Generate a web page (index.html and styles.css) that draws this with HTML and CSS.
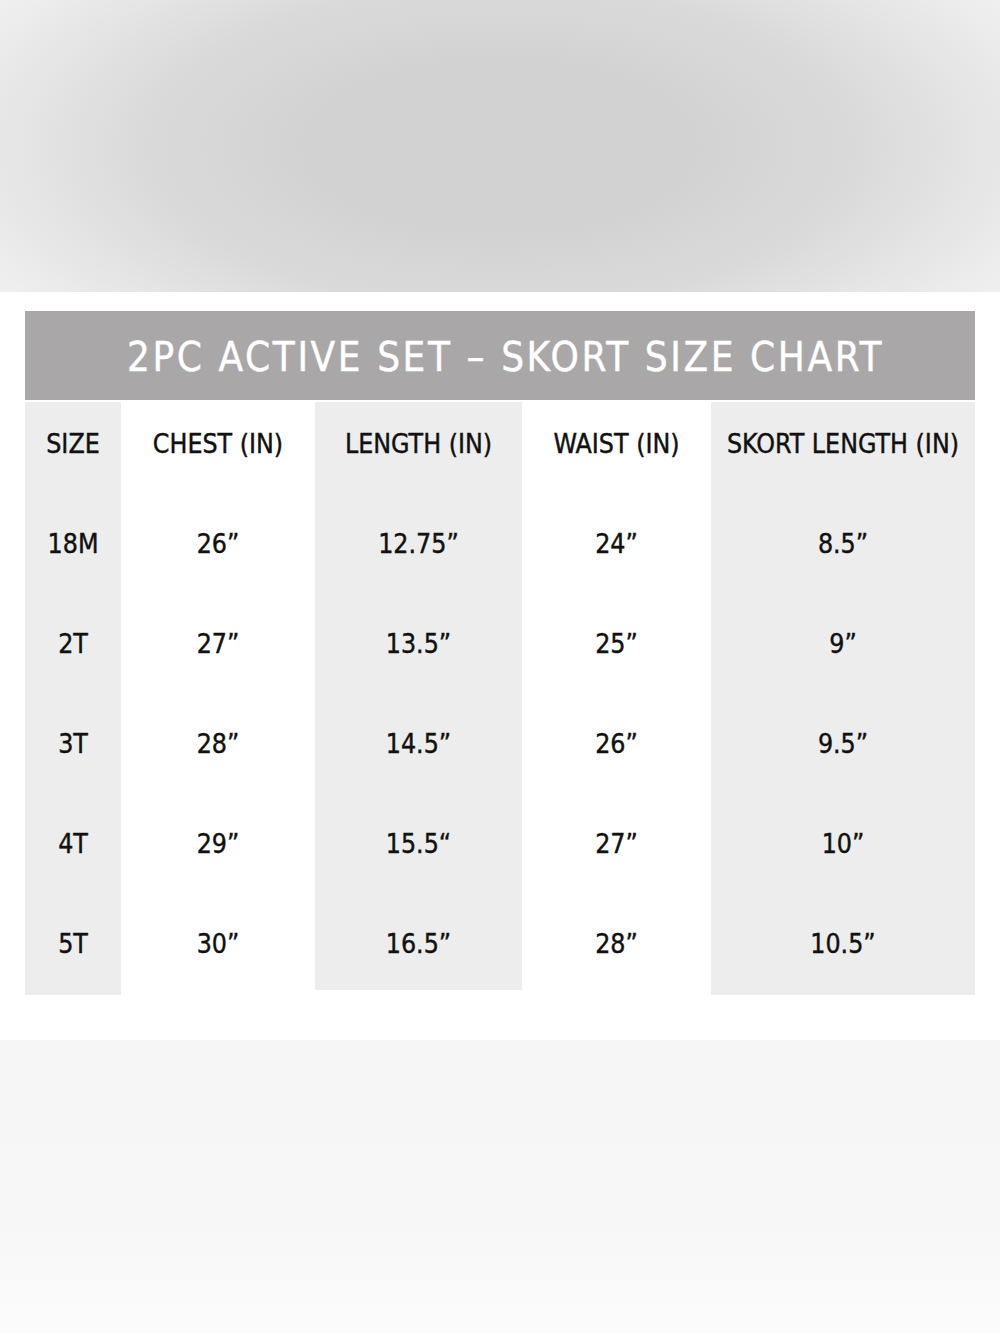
FILE: index.html
```html
<!DOCTYPE html>
<html>
<head>
<meta charset="utf-8">
<link rel="stylesheet" href="styles.css">
</head>
<body>
<div class="top-band"></div>
<div class="chart-band">
  <div class="title-bar">2PC ACTIVE SET – SKORT SIZE CHART</div>
  <div class="grid">
    <div class="col col-size shade">
      <div class="cell">SIZE</div>
      <div class="cell">18M</div>
      <div class="cell">2T</div>
      <div class="cell">3T</div>
      <div class="cell">4T</div>
      <div class="cell">5T</div>
    </div>
    <div class="col col-chest">
      <div class="cell">CHEST (IN)</div>
      <div class="cell">26”</div>
      <div class="cell">27”</div>
      <div class="cell">28”</div>
      <div class="cell">29”</div>
      <div class="cell">30”</div>
    </div>
    <div class="col col-length shade short">
      <div class="cell">LENGTH (IN)</div>
      <div class="cell">12.75”</div>
      <div class="cell">13.5”</div>
      <div class="cell">14.5”</div>
      <div class="cell">15.5“</div>
      <div class="cell">16.5”</div>
    </div>
    <div class="col col-waist">
      <div class="cell">WAIST (IN)</div>
      <div class="cell">24”</div>
      <div class="cell">25”</div>
      <div class="cell">26”</div>
      <div class="cell">27”</div>
      <div class="cell">28”</div>
    </div>
    <div class="col col-skort shade">
      <div class="cell">SKORT LENGTH (IN)</div>
      <div class="cell">8.5”</div>
      <div class="cell">9”</div>
      <div class="cell">9.5”</div>
      <div class="cell">10”</div>
      <div class="cell">10.5”</div>
    </div>
  </div>
</div>
<div class="bottom-band"></div>
</body>
</html>
```
FILE: styles.css
```css
html, body {
  margin: 0;
  padding: 0;
  background: #ffffff;
}
body {
  width: 1000px;
  font-family: "DejaVu Sans Condensed", "DejaVu Sans", sans-serif;
  color: #111111;
}
.top-band {
  height: 292px;
  background:
    radial-gradient(ellipse 62% 95% at 50% 50%, #d3d2d3 30%, #dbdadb 58%, #f3f2f2 100%);
}
.chart-band {
  height: 748px;
  background: #ffffff;
  padding: 19px 25px 0;
  box-sizing: border-box;
}
.title-bar {
  height: 89px;
  background: #a9a7a8;
  color: #ffffff;
  display: flex;
  align-items: center;
  justify-content: center;
  font-size: 40px;
  letter-spacing: 2.6px;
  -webkit-text-stroke: 0.4px #ffffff;
  padding-top: 2px;
  padding-left: 11px;
  box-sizing: border-box;
}
.grid {
  margin-top: 2px;
  display: grid;
  grid-template-columns: 96px 194px 207px 189px 264px;
  height: 593px;
  align-items: start;
}
.col {
  height: 593px;
  overflow: hidden;
}
.col.short {
  height: 588px;
}
.shade {
  background: #eeeded;
}
.cell {
  height: 100px;
  padding-bottom: 18px;
  box-sizing: border-box;
  display: flex;
  align-items: center;
  justify-content: center;
  font-size: 26.5px;
  -webkit-text-stroke: 0.4px #111111;
  white-space: nowrap;
}
.bottom-band {
  height: 293px;
  background: linear-gradient(180deg, #f6f6f6 0%, #f7f7f7 60%, #fbfbfb 100%);
}
```
